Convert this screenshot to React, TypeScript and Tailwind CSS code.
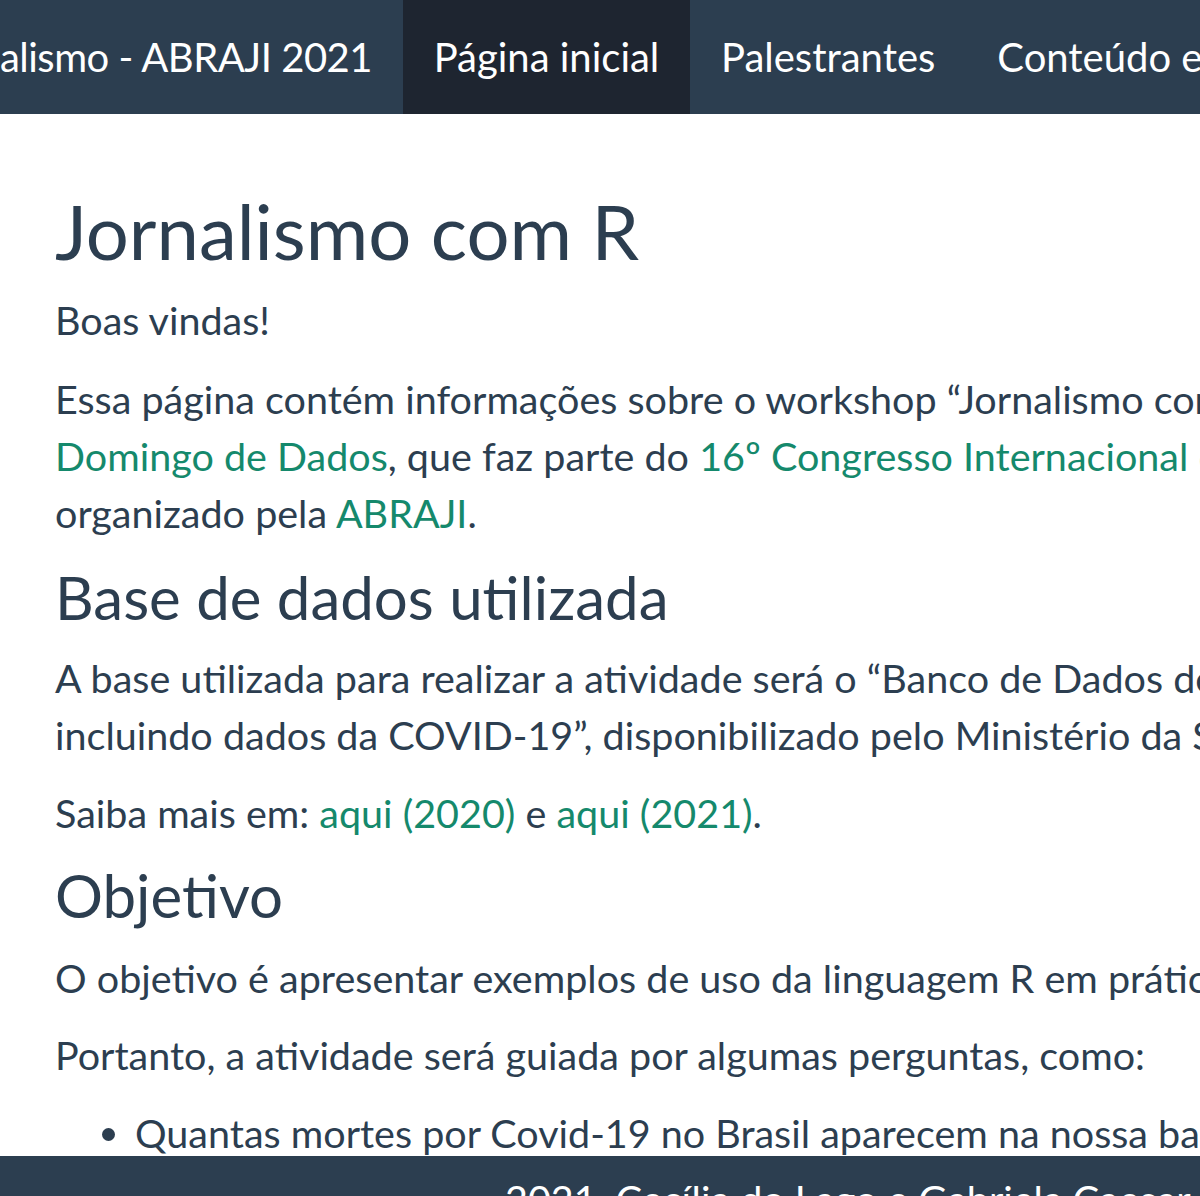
const textCls = "text-[39.5px] leading-[57px] whitespace-nowrap";

const Link = ({ children }: { children: React.ReactNode }) => (
  <a href="#" className="text-[#15896c]">
    {children}
  </a>
);

export default function App() {
  return (
    <div
      className="w-[1200px] h-[1196px] flex flex-col overflow-hidden bg-white text-[#2c3e50]"
      style={{ fontFamily: "Lato, 'Open Sans', sans-serif" }}
    >
      {/* Navbar */}
      <nav className="flex h-[114px] shrink-0 bg-[#2c3e50] text-white text-[40px] whitespace-nowrap">
        <div className="flex shrink-0 items-center justify-end w-[403px] pr-[31px] overflow-hidden">
          <span className="tracking-[-0.5px]">Workshop Jornalismo - ABRAJI 2021</span>
        </div>
        <div className="flex shrink-0 items-center justify-center bg-[#1e2530] w-[287px]">
          Página inicial
        </div>
        <div className="flex shrink-0 items-center px-[31px]">Palestrantes</div>
        <div className="flex shrink-0 items-center px-[31px]">Conteúdo extra</div>
      </nav>

      {/* Main content */}
      <main className="flex-1 overflow-hidden pl-[55px]">
        <h1 className="mt-[72px] text-[76px] leading-[90px] whitespace-nowrap">
          Jornalismo com R
        </h1>
        <p className={`${textCls} mt-[15px]`}>Boas vindas!</p>
        <div className={`${textCls} mt-[22px]`}>
          <div>
            Essa página contém informações sobre o workshop “Jornalismo com R” no
          </div>
          <div>
            <Link>Domingo de Dados</Link>, que faz parte do{" "}
            <Link>16º Congresso Internacional de Jornalismo Investigativo</Link>,
          </div>
          <div>
            organizado pela <Link>ABRAJI</Link>.
          </div>
        </div>

        <h2 className="mt-[20px] text-[60px] leading-[72px] whitespace-nowrap">
          Base de dados utilizada
        </h2>
        <div className={`${textCls} mt-[16px]`}>
          <div>
            A base utilizada para realizar a atividade será o “Banco de Dados de Síndrome Respiratória Aguda Grave,
          </div>
          <div>
            incluindo dados da COVID-19”, disponibilizado pelo Ministério da Saúde.
          </div>
        </div>
        <p className={`${textCls} mt-[21px]`}>
          Saiba mais em: <Link>aqui (2020)</Link> e <Link>aqui (2021)</Link>.
        </p>

        <h2 className="mt-[18px] text-[60px] leading-[72px] whitespace-nowrap">
          Objetivo
        </h2>
        <p className={`${textCls} mt-[18px]`}>
          O objetivo é apresentar exemplos de uso da linguagem R em práticas do jornalismo de dados.
        </p>
        <p className={`${textCls} mt-[20px]`}>
          Portanto, a atividade será guiada por algumas perguntas, como:
        </p>
        <ul className={`${textCls} mt-[21px] pl-[80px] list-disc`}>
          <li>Quantas mortes por Covid-19 no Brasil aparecem na nossa base de dados?</li>
        </ul>
      </main>

      {/* Footer */}
      <footer className="h-[40px] shrink-0 overflow-hidden bg-[#2c3e50] text-white pl-[505px] pt-[14px]">
        <div className={textCls}>2021, Cecília do Lago e Gabriela Caesar</div>
      </footer>
    </div>
  );
}
